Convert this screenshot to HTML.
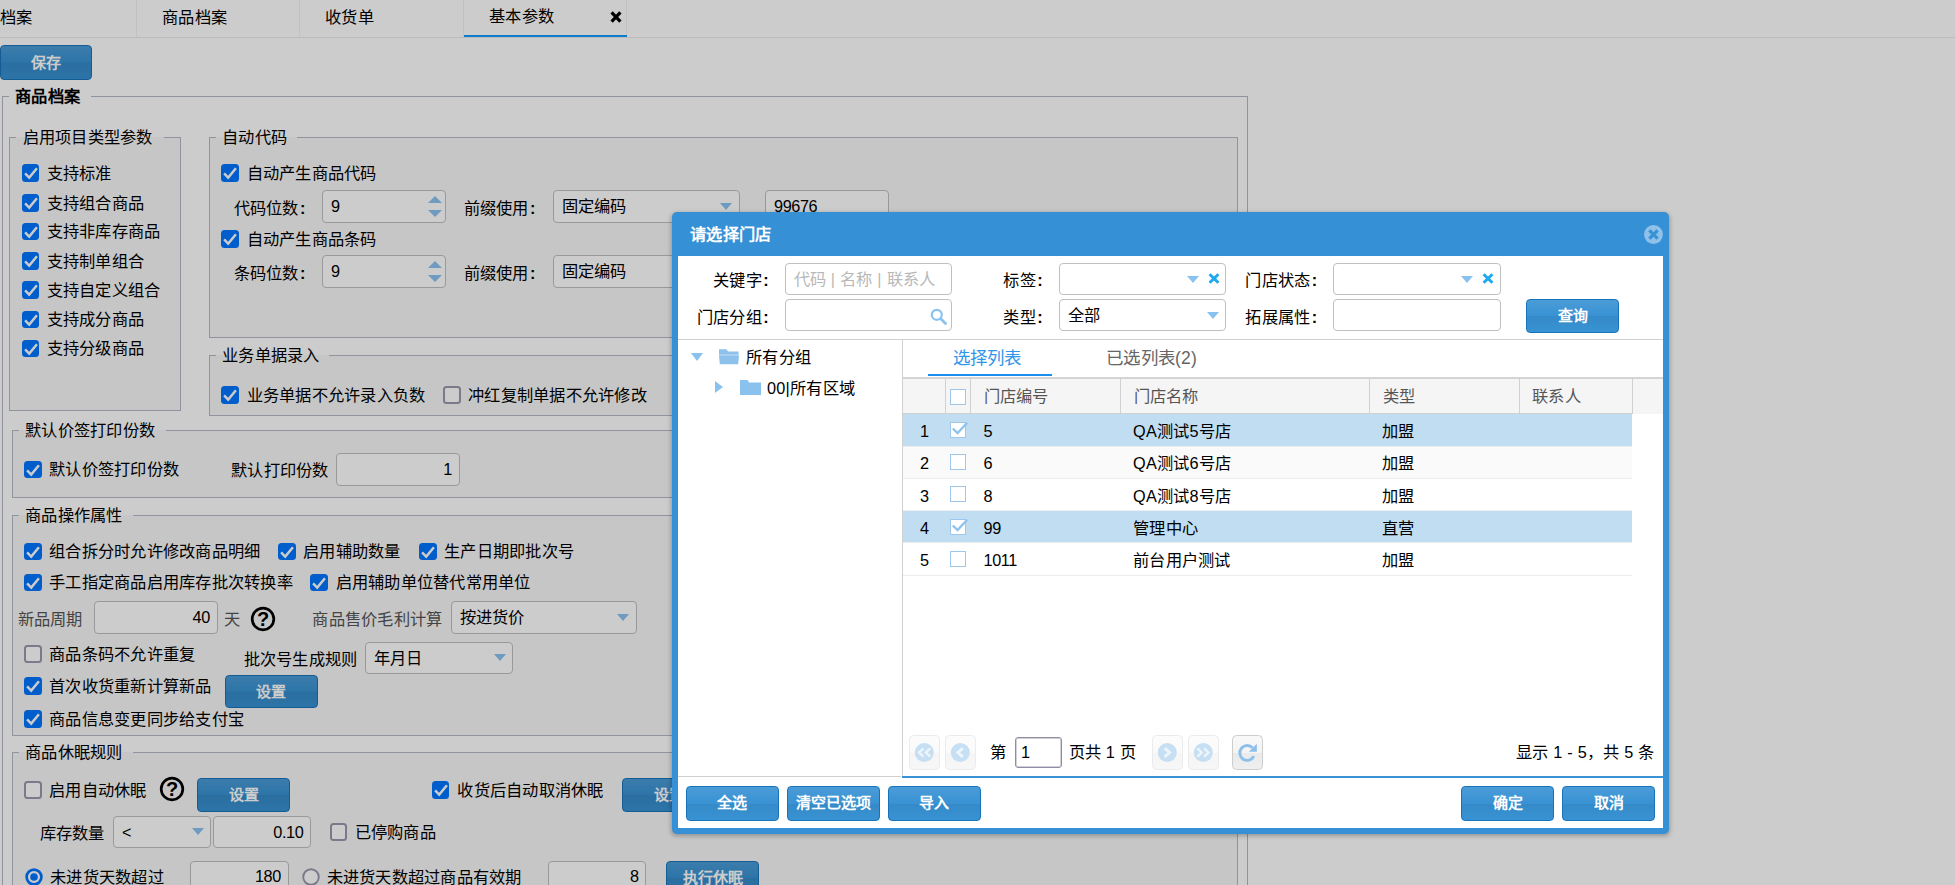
<!DOCTYPE html>
<html lang="zh-CN"><head><meta charset="utf-8"><title>基本参数</title>
<style>
*{box-sizing:border-box;margin:0;padding:0}
html,body{width:1955px;height:885px;overflow:hidden;background:#fff}
body{font-family:"Liberation Sans",sans-serif;font-size:16.25px;color:#000;position:relative}
#page,#mask,#dlg{position:absolute}
#page{left:0;top:0;width:1955px;height:885px;overflow:hidden;background:#fff}
#mask{left:0;top:0;width:1955px;height:885px;background:rgba(0,0,0,.2)}
.t{position:absolute;height:24px;line-height:24px;white-space:nowrap;letter-spacing:.25px}
.g{color:#555}
.b{font-weight:bold}
.fs{position:absolute;border:1px solid #b5b8c8;border-radius:0}
.fs.in{background:#f8f8f8}
.lg{position:absolute;letter-spacing:.25px;height:24px;line-height:24px;text-align:center;white-space:nowrap;background:#fff}
.lg.in{background:linear-gradient(#fff 0,#fff 50%,#f8f8f8 50%)}
.cb{position:absolute;width:17.5px;height:17.5px;border:2px solid #9a98ad;border-radius:3.5px;background:#fff}
.cb.on{border:none;background:#0075ff}
.cb svg{display:block;width:17.5px;height:17.5px}
.rd{position:absolute;width:17.5px;height:17.5px;border:1.8px solid #8b8a99;border-radius:50%;background:#fff}
.rd.on{border:2.6px solid #0075ff}
.rd i{position:absolute;left:2.4px;top:2.4px;width:7.5px;height:7.5px;border-radius:50%;background:#0075ff}
.inp{position:absolute;letter-spacing:.25px;border:1px solid #c0c0c0;border-radius:4px;background:#fff;padding:0 6.7px 0 8px;white-space:nowrap;overflow:hidden}
.tri{position:absolute;right:6.5px;top:50%;margin-top:-3.5px;border:6.5px solid transparent;border-top:7px solid #8ac2ef;border-bottom:0}
.tri2{position:absolute;right:26.5px;top:50%;margin-top:-3.5px;border:6.5px solid transparent;border-top:7px solid #8ac2ef;border-bottom:0}
.inp svg{position:absolute}
i.c{font-style:normal;margin-left:1.5px;font-weight:bold}
.n{letter-spacing:-.4px}
.sp1{position:absolute;right:3.3px;top:5.3px;border:7px solid transparent;border-bottom:7px solid #8ac2ef;border-top:0}
.sp2{position:absolute;right:3.3px;bottom:4.7px;border:7px solid transparent;border-top:7px solid #8ac2ef;border-bottom:0}
.btn{position:absolute;border:1px solid #1874ba;border-radius:4px;background:linear-gradient(#4b9cd7 0,#3892d3 50%,#358ac8 51%,#3892d3 100%);color:#fff;font-weight:bold;font-size:15px;text-align:center;white-space:nowrap}
.help{position:absolute;width:24.4px;height:24.4px;font-weight:bold;font-size:20px;line-height:25.5px;text-align:center}
.vl{position:absolute;width:1px;background:#ddd}
.hl{position:absolute;height:1px;background:#ddd}
#dlg{left:672px;top:211.5px;width:997px;height:622.7px;background:#3590d5;border-radius:5px;box-shadow:0 1.5px 4px .5px rgba(0,0,0,.26)}
#body{position:absolute;left:6px;top:44.5px;width:985px;height:572px;background:#fff;overflow:hidden}
.d{position:absolute}
.ph{color:#b8b8b8}
.row{position:absolute;left:224.5px;width:729px;height:32.25px}
.row.sel{background:#c1ddf1}
.row.alt{background:#fafafa}
.gcb{position:absolute;width:16px;height:16px;border:1px solid #9dc7ec;background:#fff}
.pb{position:absolute;width:30.6px;height:34.4px;border:1px solid #ebebeb;border-radius:4.5px;background:linear-gradient(#fcfcfc 0,#fafafa 50%,#f5f5f5 51%,#f7f7f7 100%)}
.pb.en{border-color:#cdcdcd;background:linear-gradient(#f8f8f8 0,#f4f4f4 50%,#eaeaea 51%,#efefef 100%)}
.pb svg{position:absolute;left:-1px;top:-1px;width:30.6px;height:34.4px}
</style></head><body>
<div id="page">
<div class="d" style="left:0;top:0;width:1955px;height:38px;background:#fff;border-bottom:1px solid #ececec"></div>
<div class="vl" style="left:136px;top:0;height:37px;background:#f2f2f2"></div>
<div class="vl" style="left:299px;top:0;height:37px;background:#f2f2f2"></div>
<div class="vl" style="left:463px;top:0;height:37px;background:#f2f2f2"></div>
<div class="vl" style="left:626px;top:0;height:37px;background:#f2f2f2"></div>
<div class="t " style="top:4.50px;left:-0.50px;">档案</div>
<div class="t " style="top:4.50px;left:162.00px;">商品档案</div>
<div class="t " style="top:4.50px;left:325.00px;">收货单</div>
<div class="t " style="top:4.00px;left:489.00px;">基本参数</div>
<svg class="d" style="left:609.5px;top:11.2px" width="12" height="12" viewBox="0 0 12 12"><path d="M1.6 1.4l8.8 9.2M10.4 1.4L1.6 10.6" stroke="#000" stroke-width="3.2" fill="none"/></svg>
<div class="d" style="left:464px;top:34.6px;width:163px;height:2.4px;background:#109aff"></div>
<div class="btn " style="left:0.00px;top:44.60px;width:92.30px;height:35.00px;line-height:33.00px">保存</div>
<div class="fs b" style="left:2.00px;top:96.00px;width:1245.50px;height:904.00px"></div>
<div class="lg b" style="left:8.50px;top:83.50px;width:82.00px;padding:0 10.5px 0 6.5px">商品档案</div>
<div class="fs in" style="left:9.00px;top:137.00px;width:171.50px;height:273.50px"></div>
<div class="lg in" style="left:15.50px;top:124.50px;width:148.00px;padding:0 10.5px 0 6.5px">启用项目类型参数</div>
<div class="cb on" style="left:21.50px;top:164.10px"><svg viewBox="0 0 17 17"><path d="M3 9.2l4 4 7.5-9" fill="none" stroke="#fff" stroke-width="2.4"/></svg></div>
<div class="t " style="top:160.50px;left:46.50px;">支持标准</div>
<div class="cb on" style="left:21.50px;top:194.10px"><svg viewBox="0 0 17 17"><path d="M3 9.2l4 4 7.5-9" fill="none" stroke="#fff" stroke-width="2.4"/></svg></div>
<div class="t " style="top:190.50px;left:46.50px;">支持组合商品</div>
<div class="cb on" style="left:21.50px;top:222.80px"><svg viewBox="0 0 17 17"><path d="M3 9.2l4 4 7.5-9" fill="none" stroke="#fff" stroke-width="2.4"/></svg></div>
<div class="t " style="top:219.20px;left:46.50px;">支持非库存商品</div>
<div class="cb on" style="left:21.50px;top:252.40px"><svg viewBox="0 0 17 17"><path d="M3 9.2l4 4 7.5-9" fill="none" stroke="#fff" stroke-width="2.4"/></svg></div>
<div class="t " style="top:248.80px;left:46.50px;">支持制单组合</div>
<div class="cb on" style="left:21.50px;top:281.40px"><svg viewBox="0 0 17 17"><path d="M3 9.2l4 4 7.5-9" fill="none" stroke="#fff" stroke-width="2.4"/></svg></div>
<div class="t " style="top:277.80px;left:46.50px;">支持自定义组合</div>
<div class="cb on" style="left:21.50px;top:310.80px"><svg viewBox="0 0 17 17"><path d="M3 9.2l4 4 7.5-9" fill="none" stroke="#fff" stroke-width="2.4"/></svg></div>
<div class="t " style="top:307.20px;left:46.50px;">支持成分商品</div>
<div class="cb on" style="left:21.50px;top:339.60px"><svg viewBox="0 0 17 17"><path d="M3 9.2l4 4 7.5-9" fill="none" stroke="#fff" stroke-width="2.4"/></svg></div>
<div class="t " style="top:336.00px;left:46.50px;">支持分级商品</div>
<div class="fs in" style="left:208.50px;top:137.00px;width:1029.00px;height:201.00px"></div>
<div class="lg in" style="left:215.50px;top:124.50px;width:81.50px;padding:0 10.5px 0 6.5px">自动代码</div>
<div class="cb on" style="left:221.00px;top:164.10px"><svg viewBox="0 0 17 17"><path d="M3 9.2l4 4 7.5-9" fill="none" stroke="#fff" stroke-width="2.4"/></svg></div>
<div class="t " style="top:160.50px;left:246.50px;">自动产生商品代码</div>
<div class="t " style="top:196.00px;left:233.50px;">代码位数<i class="c">:</i></div>
<div class="inp  n" style="left:322.00px;top:190.00px;width:124.00px;height:32.50px;line-height:30.50px;text-align:left">9
<b class="sp1"></b><b class="sp2"></b>
</div>
<div class="t " style="top:196.00px;left:463.50px;">前缀使用<i class="c">:</i></div>
<div class="inp " style="left:552.50px;top:190.00px;width:187.00px;height:32.50px;line-height:30.50px;text-align:left">固定编码
<b class="tri"></b>
</div>
<div class="inp  n" style="left:765.00px;top:190.00px;width:123.50px;height:32.50px;line-height:30.50px;text-align:left">99676
</div>
<div class="cb on" style="left:221.00px;top:230.10px"><svg viewBox="0 0 17 17"><path d="M3 9.2l4 4 7.5-9" fill="none" stroke="#fff" stroke-width="2.4"/></svg></div>
<div class="t " style="top:226.50px;left:246.50px;">自动产生商品条码</div>
<div class="t " style="top:261.20px;left:233.50px;">条码位数<i class="c">:</i></div>
<div class="inp  n" style="left:322.00px;top:255.00px;width:124.00px;height:32.50px;line-height:30.50px;text-align:left">9
<b class="sp1"></b><b class="sp2"></b>
</div>
<div class="t " style="top:261.20px;left:463.50px;">前缀使用<i class="c">:</i></div>
<div class="inp " style="left:552.50px;top:255.00px;width:187.00px;height:32.50px;line-height:30.50px;text-align:left">固定编码
<b class="tri"></b>
</div>
<div class="fs in" style="left:208.50px;top:355.00px;width:1029.00px;height:61.00px"></div>
<div class="lg in" style="left:215.50px;top:342.50px;width:113.50px;padding:0 10.5px 0 6.5px">业务单据录入</div>
<div class="cb on" style="left:221.00px;top:386.10px"><svg viewBox="0 0 17 17"><path d="M3 9.2l4 4 7.5-9" fill="none" stroke="#fff" stroke-width="2.4"/></svg></div>
<div class="t " style="top:382.50px;left:246.50px;">业务单据不允许录入负数</div>
<div class="cb" style="left:443.00px;top:386.10px"></div>
<div class="t " style="top:382.50px;left:468.00px;">冲红复制单据不允许修改</div>
<div class="fs in" style="left:11.50px;top:430.00px;width:1226.00px;height:68.00px"></div>
<div class="lg in" style="left:18.50px;top:417.50px;width:147.00px;padding:0 10.5px 0 6.5px">默认价签打印份数</div>
<div class="cb on" style="left:24.00px;top:460.60px"><svg viewBox="0 0 17 17"><path d="M3 9.2l4 4 7.5-9" fill="none" stroke="#fff" stroke-width="2.4"/></svg></div>
<div class="t " style="top:457.00px;left:49.00px;">默认价签打印份数</div>
<div class="t " style="top:458.00px;left:231.00px;">默认打印份数</div>
<div class="inp  n" style="left:336.00px;top:453.00px;width:123.50px;height:32.50px;line-height:30.50px;text-align:right">1
</div>
<div class="fs in" style="left:11.50px;top:515.00px;width:1226.00px;height:221.00px"></div>
<div class="lg in" style="left:18.50px;top:502.50px;width:114.50px;padding:0 10.5px 0 6.5px">商品操作属性</div>
<div class="cb on" style="left:24.00px;top:542.80px"><svg viewBox="0 0 17 17"><path d="M3 9.2l4 4 7.5-9" fill="none" stroke="#fff" stroke-width="2.4"/></svg></div>
<div class="t " style="top:539.20px;left:49.00px;">组合拆分时允许修改商品明细</div>
<div class="cb on" style="left:278.20px;top:542.80px"><svg viewBox="0 0 17 17"><path d="M3 9.2l4 4 7.5-9" fill="none" stroke="#fff" stroke-width="2.4"/></svg></div>
<div class="t " style="top:539.20px;left:303.00px;">启用辅助数量</div>
<div class="cb on" style="left:419.00px;top:542.80px"><svg viewBox="0 0 17 17"><path d="M3 9.2l4 4 7.5-9" fill="none" stroke="#fff" stroke-width="2.4"/></svg></div>
<div class="t " style="top:539.20px;left:444.00px;">生产日期即批次号</div>
<div class="cb on" style="left:24.00px;top:573.90px"><svg viewBox="0 0 17 17"><path d="M3 9.2l4 4 7.5-9" fill="none" stroke="#fff" stroke-width="2.4"/></svg></div>
<div class="t " style="top:570.30px;left:49.00px;">手工指定商品启用库存批次转换率</div>
<div class="cb on" style="left:310.40px;top:573.90px"><svg viewBox="0 0 17 17"><path d="M3 9.2l4 4 7.5-9" fill="none" stroke="#fff" stroke-width="2.4"/></svg></div>
<div class="t " style="top:570.30px;left:335.50px;">启用辅助单位替代常用单位</div>
<div class="t g" style="top:606.50px;left:17.50px;">新品周期</div>
<div class="inp  n" style="left:94.00px;top:601.00px;width:123.50px;height:32.50px;line-height:30.50px;text-align:right">40
</div>
<div class="t g" style="top:606.50px;left:223.50px;">天</div>
<svg class="d" style="left:250.20px;top:606.30px" width="26" height="26" viewBox="0 0 26 26"><circle cx="13" cy="13" r="10.8" fill="none" stroke="#000" stroke-width="2.7"/></svg><div class="help" style="left:251.00px;top:607.10px">?</div>
<div class="t g" style="top:606.50px;left:312.30px;">商品售价毛利计算</div>
<div class="inp " style="left:450.50px;top:601.00px;width:186.00px;height:32.50px;line-height:30.50px;text-align:left">按进货价
<b class="tri"></b>
</div>
<div class="cb" style="left:24.00px;top:645.10px"></div>
<div class="t " style="top:641.50px;left:49.00px;">商品条码不允许重复</div>
<div class="t " style="top:646.50px;left:243.50px;">批次号生成规则</div>
<div class="inp " style="left:364.50px;top:641.50px;width:148.50px;height:32.50px;line-height:30.50px;text-align:left">年月日
<b class="tri"></b>
</div>
<div class="cb on" style="left:24.00px;top:677.40px"><svg viewBox="0 0 17 17"><path d="M3 9.2l4 4 7.5-9" fill="none" stroke="#fff" stroke-width="2.4"/></svg></div>
<div class="t " style="top:673.80px;left:49.00px;">首次收货重新计算新品</div>
<div class="btn " style="left:224.80px;top:674.50px;width:92.80px;height:33.70px;line-height:31.70px">设置</div>
<div class="cb on" style="left:24.00px;top:710.40px"><svg viewBox="0 0 17 17"><path d="M3 9.2l4 4 7.5-9" fill="none" stroke="#fff" stroke-width="2.4"/></svg></div>
<div class="t " style="top:706.80px;left:49.00px;">商品信息变更同步给支付宝</div>
<div class="fs in" style="left:11.50px;top:752.00px;width:1226.00px;height:248.00px"></div>
<div class="lg in" style="left:18.50px;top:739.50px;width:114.50px;padding:0 10.5px 0 6.5px">商品休眠规则</div>
<div class="cb" style="left:24.00px;top:781.30px"></div>
<div class="t " style="top:777.70px;left:49.00px;">启用自动休眠</div>
<svg class="d" style="left:159.10px;top:776.00px" width="26" height="26" viewBox="0 0 26 26"><circle cx="13" cy="13" r="10.8" fill="none" stroke="#000" stroke-width="2.7"/></svg><div class="help" style="left:159.90px;top:776.80px">?</div>
<div class="btn " style="left:197.30px;top:777.60px;width:93.10px;height:34.00px;line-height:32.00px">设置</div>
<div class="cb on" style="left:431.50px;top:781.30px"><svg viewBox="0 0 17 17"><path d="M3 9.2l4 4 7.5-9" fill="none" stroke="#fff" stroke-width="2.4"/></svg></div>
<div class="t " style="top:777.70px;left:457.30px;">收货后自动取消休眠</div>
<div class="btn " style="left:622.30px;top:777.60px;width:93.10px;height:34.00px;line-height:32.00px">设置</div>
<div class="t " style="top:820.50px;left:39.50px;">库存数量</div>
<div class="inp " style="left:113.00px;top:815.50px;width:98.20px;height:32.50px;line-height:30.50px;text-align:left">&lt;
<b class="tri"></b>
</div>
<div class="inp  n" style="left:212.70px;top:815.50px;width:98.30px;height:32.50px;line-height:30.50px;text-align:right">0.10
</div>
<div class="cb" style="left:329.50px;top:823.10px"></div>
<div class="t " style="top:819.50px;left:354.50px;">已停购商品</div>
<svg class="d" style="left:24.75px;top:867.80px" width="18" height="18" viewBox="0 0 18 18"><circle cx="9" cy="9" r="7.4" fill="#fff" stroke="#0075ff" stroke-width="2.7"/><circle cx="9" cy="9" r="3.8" fill="#0075ff"/></svg>
<div class="t " style="top:864.50px;left:50.20px;">未进货天数超过</div>
<div class="inp  n" style="left:190.00px;top:861.40px;width:98.60px;height:31.60px;line-height:29.60px;text-align:right">180
</div>
<svg class="d" style="left:301.55px;top:867.80px" width="18" height="18" viewBox="0 0 18 18"><circle cx="9" cy="9" r="7.8" fill="#fff" stroke="#9a98ad" stroke-width="1.9"/></svg>
<div class="t " style="top:864.50px;left:326.60px;">未进货天数超过商品有效期</div>
<div class="inp  n" style="left:547.80px;top:861.40px;width:98.50px;height:31.60px;line-height:29.60px;text-align:right">8
</div>
<div class="btn " style="left:666.00px;top:860.70px;width:93.00px;height:34.30px;line-height:32.30px">执行休眠</div>
</div><div id="mask"></div>
<div id="dlg">
<div class="t b" style="left:18px;top:10px;color:#fff">请选择门店</div>
<svg class="d" style="left:972px;top:13.5px" width="19" height="19" viewBox="0 0 19 19"><circle cx="9.5" cy="9.5" r="9.4" fill="#8fc1e9"/><path d="M5.4 5.4l8.2 8.2M13.6 5.4l-8.2 8.2" stroke="#3892d4" stroke-width="3.3" fill="none"/></svg>
<div id="body">
<div class="t " style="top:11.50px;left:-309.00px;width:400px;text-align:right;">关键字<i class="c">:</i></div>
<div class="inp " style="left:106.50px;top:7.00px;width:167.20px;height:32.00px;line-height:30.00px;text-align:left"><span class="ph">代码 | 名称 | 联系人</span>
</div>
<div class="t " style="top:11.50px;left:-35.00px;width:400px;text-align:right;">标签<i class="c">:</i></div>
<div class="inp " style="left:380.50px;top:7.00px;width:167.50px;height:32.00px;line-height:30.00px;text-align:left">
<b class="tri2"></b><svg style="right:5.5px;top:50%;margin-top:-6px" width="12" height="11" viewBox="0 0 12 11"><path d="M1.6 1.2l8.8 8.6M10.4 1.2L1.6 9.8" stroke="#1fa9f0" stroke-width="3" fill="none"/></svg>
</div>
<div class="t " style="top:11.50px;left:239.50px;width:400px;text-align:right;">门店状态<i class="c">:</i></div>
<div class="inp " style="left:655.00px;top:7.00px;width:167.50px;height:32.00px;line-height:30.00px;text-align:left">
<b class="tri2"></b><svg style="right:5.5px;top:50%;margin-top:-6px" width="12" height="11" viewBox="0 0 12 11"><path d="M1.6 1.2l8.8 8.6M10.4 1.2L1.6 9.8" stroke="#1fa9f0" stroke-width="3" fill="none"/></svg>
</div>
<div class="t " style="top:48.50px;left:-309.00px;width:400px;text-align:right;">门店分组<i class="c">:</i></div>
<div class="inp " style="left:106.50px;top:43.00px;width:167.20px;height:32.00px;line-height:30.00px;text-align:left">
<svg style="right:4px;top:50%;margin-top:-7.5px" width="17" height="17" viewBox="0 0 17 17"><circle cx="6.8" cy="6.8" r="5" fill="none" stroke="#8ac2ef" stroke-width="2.2"/><path d="M10.5 10.5l5 5" stroke="#8ac2ef" stroke-width="2.8" stroke-linecap="round"/></svg>
</div>
<div class="t " style="top:48.50px;left:-35.00px;width:400px;text-align:right;">类型<i class="c">:</i></div>
<div class="inp " style="left:380.50px;top:43.00px;width:167.50px;height:32.00px;line-height:30.00px;text-align:left">全部
<b class="tri"></b>
</div>
<div class="t " style="top:48.50px;left:239.50px;width:400px;text-align:right;">拓展属性<i class="c">:</i></div>
<div class="inp " style="left:655.00px;top:43.00px;width:167.50px;height:32.00px;line-height:30.00px;text-align:left">
</div>
<div class="btn " style="left:848.00px;top:43.20px;width:93.20px;height:34.30px;line-height:32.30px">查询</div>
<div class="hl" style="left:0;top:83px;width:985px;background:#d0d0d0"></div>
<div class="vl" style="left:223.5px;top:84px;height:436px;background:#d0d0d0"></div>
<div class="d" style="left:13px;top:97px;border:6.5px solid transparent;border-top:8px solid #8ac2ef;border-bottom:0"></div>
<svg class="d" style="left:40px;top:92px" width="22" height="17" viewBox="0 0 22 17"><path d="M1 1.2h7.5l1.5 2.3H20.5v3.2H1z" fill="#8dc0ea"/><path d="M1 7.3h20l-0.8 8.9H1.8z" fill="#8dc0ea"/></svg>
<div class="t " style="top:89.00px;left:68.00px;">所有分组</div>
<div class="d" style="left:36.5px;top:125px;border:6.5px solid transparent;border-left:8px solid #8ac2ef;border-right:0"></div>
<svg class="d" style="left:62px;top:123px" width="21" height="16" viewBox="0 0 21 16"><path d="M0 1h7.5l1.5 2.5h12V16H0z" fill="#8ac2ef"/></svg>
<div class="t " style="top:120.00px;left:89.00px;">00|所有区域</div>
<div class="t " style="top:90.00px;left:274.50px;color:#2f96ea;font-size:17.5px">选择列表</div>
<div class="t " style="top:90.00px;left:428.00px;color:#666;font-size:17.5px">已选列表(2)</div>
<div class="d" style="left:249.5px;top:117.5px;width:124.5px;height:2.5px;background:#1a8ff0"></div>
<div class="hl" style="left:224px;top:121.30000000000001px;width:762px;height:2px;background:#d4d4d4"></div>
<div class="d" style="left:224.5px;top:122.5px;width:761px;height:35.7px;background:#f5f5f5"></div>
<div class="hl" style="left:224.5px;top:157.2px;width:730px;background:#d0d0d0"></div>
<div class="vl" style="left:267.40px;top:122.5px;height:35.7px;background:#d0d0d0"></div>
<div class="vl" style="left:292.00px;top:122.5px;height:35.7px;background:#d0d0d0"></div>
<div class="vl" style="left:442.00px;top:122.5px;height:35.7px;background:#d0d0d0"></div>
<div class="vl" style="left:691.00px;top:122.5px;height:35.7px;background:#d0d0d0"></div>
<div class="vl" style="left:840.50px;top:122.5px;height:35.7px;background:#d0d0d0"></div>
<div class="vl" style="left:953.50px;top:122.5px;height:35.7px;background:#d0d0d0"></div>
<div class="gcb" style="left:272px;top:132.5px"></div>
<div class="t " style="top:127.50px;left:305.50px;color:#555">门店编号</div>
<div class="t " style="top:127.50px;left:455.50px;color:#555">门店名称</div>
<div class="t " style="top:127.50px;left:704.50px;color:#555">类型</div>
<div class="t " style="top:127.50px;left:854.00px;color:#555">联系人</div>
<div class="row sel" style="top:158.40px;border-bottom:1px solid #ededed"></div>
<div class="t " style="top:163.10px;left:242.00px;">1</div>
<div class="gcb" style="left:272px;top:165.80px"><svg viewBox="0 0 17 17" width="17" height="17" style="position:absolute;left:0;top:-2px;overflow:visible"><path d="M1.8 7.5l4.8 4.6L16.2 1.8" fill="none" stroke="#90c3ec" stroke-width="2.4"/></svg></div>
<div class="t n" style="top:163.10px;left:305.50px;">5</div>
<div class="t " style="top:163.10px;left:455.00px;">QA测试5号店</div>
<div class="t " style="top:163.10px;left:704.00px;">加盟</div>
<div class="row alt" style="top:190.65px;border-bottom:1px solid #ededed"></div>
<div class="t " style="top:195.35px;left:242.00px;">2</div>
<div class="gcb" style="left:272px;top:198.05px"></div>
<div class="t n" style="top:195.35px;left:305.50px;">6</div>
<div class="t " style="top:195.35px;left:455.00px;">QA测试6号店</div>
<div class="t " style="top:195.35px;left:704.00px;">加盟</div>
<div class="row" style="top:222.90px;border-bottom:1px solid #ededed"></div>
<div class="t " style="top:227.60px;left:242.00px;">3</div>
<div class="gcb" style="left:272px;top:230.30px"></div>
<div class="t n" style="top:227.60px;left:305.50px;">8</div>
<div class="t " style="top:227.60px;left:455.00px;">QA测试8号店</div>
<div class="t " style="top:227.60px;left:704.00px;">加盟</div>
<div class="row sel" style="top:255.15px;border-bottom:1px solid #ededed"></div>
<div class="t " style="top:259.85px;left:242.00px;">4</div>
<div class="gcb" style="left:272px;top:262.55px"><svg viewBox="0 0 17 17" width="17" height="17" style="position:absolute;left:0;top:-2px;overflow:visible"><path d="M1.8 7.5l4.8 4.6L16.2 1.8" fill="none" stroke="#90c3ec" stroke-width="2.4"/></svg></div>
<div class="t n" style="top:259.85px;left:305.50px;">99</div>
<div class="t " style="top:259.85px;left:455.00px;">管理中心</div>
<div class="t " style="top:259.85px;left:704.00px;">直营</div>
<div class="row" style="top:287.40px;border-bottom:1px solid #ededed"></div>
<div class="t " style="top:292.10px;left:242.00px;">5</div>
<div class="gcb" style="left:272px;top:294.80px"></div>
<div class="t n" style="top:292.10px;left:305.50px;">1011</div>
<div class="t " style="top:292.10px;left:455.00px;">前台用户测试</div>
<div class="t " style="top:292.10px;left:704.00px;">加盟</div>
<div class="pb " style="left:231.20px;top:479.20px"><svg viewBox="0 0 30.6 34.4"><circle cx="15.3" cy="17.45" r="9.5" fill="#c6dff3"/><path d="M14.4 13.4l-4.3 4.1 4.3 4.2M21.2 13.4l-4.3 4.1 4.3 4.2" stroke="#edf5fb" stroke-width="2.4" fill="none"/></svg></div>
<div class="pb " style="left:267.40px;top:479.20px"><svg viewBox="0 0 30.6 34.4"><circle cx="15.3" cy="17.45" r="9.5" fill="#c6dff3"/><path d="M17.9 13.2l-5 4.3 5 4.4" stroke="#edf5fb" stroke-width="2.9" fill="none"/></svg></div>
<div class="t " style="top:484.00px;left:312.00px;">第</div>
<div class="d" style="left:337px;top:481px;width:47px;height:30.5px;border:1px solid #8f8da3;box-shadow:inset 0 0 0 1px rgba(143,141,163,.4);border-radius:3px;background:#fff;line-height:29.5px;padding-left:5px">1</div>
<div class="t " style="top:484.00px;left:390.50px;">页共 1 页</div>
<div class="pb " style="left:474.30px;top:479.20px"><svg viewBox="0 0 30.6 34.4"><circle cx="15.3" cy="17.45" r="9.5" fill="#c6dff3"/><path d="M12.6 13.2l5 4.3-5 4.4" stroke="#edf5fb" stroke-width="2.9" fill="none"/></svg></div>
<div class="pb " style="left:510.20px;top:479.20px"><svg viewBox="0 0 30.6 34.4"><circle cx="15.3" cy="17.45" r="9.5" fill="#c6dff3"/><path d="M9.4 13.4l4.3 4.1-4.3 4.2M16.2 13.4l4.3 4.1-4.3 4.2" stroke="#edf5fb" stroke-width="2.4" fill="none"/></svg></div>
<div class="pb en" style="left:554.00px;top:479.20px"><svg viewBox="0 0 30.6 34.4"><path d="M20.5 12.8A7.4 7.4 0 1 0 21.85 21.1" fill="none" stroke="#8cc0ea" stroke-width="2.9"/><path d="M24.9 8.7v8.1h-8.1z" fill="#8cc0ea"/></svg></div>
<div class="t " style="top:484.00px;left:576.50px;width:400px;text-align:right;">显示 1 - 5，共 5 条</div>
<div class="hl" style="left:224px;top:520.2px;width:762px;height:1.6px;background:#3892d4"></div>
<div class="hl" style="left:0;top:520px;width:223px;background:#d0d0d0"></div>
<div class="btn " style="left:8.00px;top:530.00px;width:92.80px;height:34.60px;line-height:32.60px">全选</div>
<div class="btn " style="left:109.00px;top:530.00px;width:92.80px;height:34.60px;line-height:32.60px">清空已选项</div>
<div class="btn " style="left:210.00px;top:530.00px;width:92.80px;height:34.60px;line-height:32.60px">导入</div>
<div class="btn " style="left:783.20px;top:530.00px;width:93.00px;height:34.60px;line-height:32.60px">确定</div>
<div class="btn " style="left:884.20px;top:530.00px;width:93.00px;height:34.60px;line-height:32.60px">取消</div>
</div></div></body></html>
